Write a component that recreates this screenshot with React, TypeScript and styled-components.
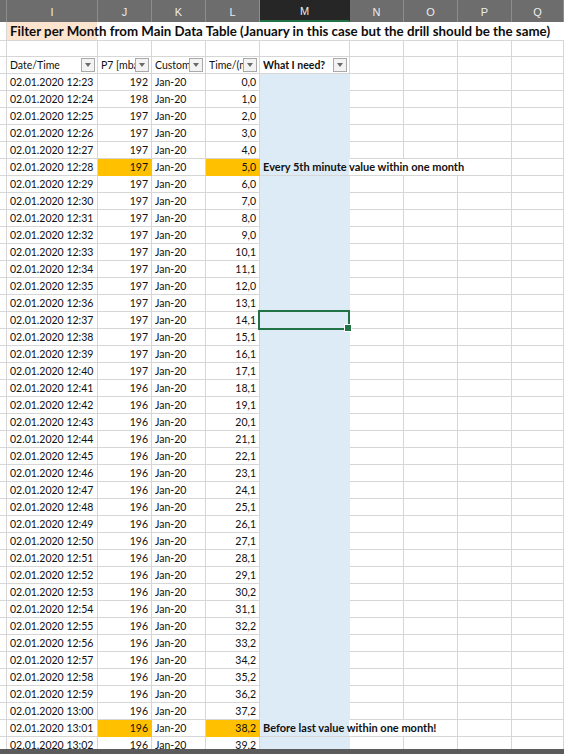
import React from "react";
import styled, { createGlobalStyle } from "styled-components";

const GlobalStyle = createGlobalStyle`
  html, body { margin: 0; padding: 0; background: #ffffff; }
  body { overflow: hidden; font-family: Lato, "Liberation Sans", sans-serif; }
  * { box-sizing: border-box; }
`;

const GRID = "#d6d6d6";
const PEACH = "#fce4cf";
const BLUE = "#ddebf7";
const ORANGE = "#ffc000";

// column widths (each includes its right gridline)
const COLS = [7, 91, 54, 54, 54, 90, 54, 54, 54, 52];
const LETTERS = ["", "I", "J", "K", "L", "M", "N", "O", "P", "Q"];

const Window = styled.div`
  width: 564px;
  height: 754px;
  display: flex;
  flex-direction: column;
  overflow: hidden;
`;

const Sheet = styled.div`
  flex: 1;
  min-height: 0;
  overflow: hidden;
  display: grid;
  grid-template-columns: ${COLS.map((c) => `${c}px`).join(" ")};
  grid-template-rows: 22px 19px 16px 17px;
  grid-auto-rows: 17px;
  align-content: start;
`;

const ColHead = styled.div<{ $active?: boolean }>`
  display: flex;
  align-items: center;
  justify-content: center;
  background: ${(p) => (p.$active ? "#262626" : "#6d6d6d")};
  color: ${(p) => (p.$active ? "#e4efe7" : "#ececec")};
  font-family: "Liberation Sans", Arial, sans-serif;
  font-size: 11px;
  padding-top: 2px;
  border-right: 1px solid ${(p) => (p.$active ? "#262626" : "#8d8d8d")};
  border-bottom: ${(p) => (p.$active ? "2px solid #217346" : "none")};
`;

const Cell = styled.div<{
  $right?: boolean;
  $fill?: string;
  $bold?: boolean;
  $span?: number;
  $bg?: string;
}>`
  position: relative;
  grid-column: ${(p) => (p.$span ? `span ${p.$span}` : "auto")};
  display: flex;
  align-items: flex-end;
  justify-content: ${(p) => (p.$right ? "flex-end" : "flex-start")};
  padding: 0 3px 1px 3px;
  font-size: ${(p) => (p.$bold ? "11px" : "10.5px")};
  line-height: 14px;
  color: #111111;
  font-weight: ${(p) => (p.$bold ? 700 : 400)};
  white-space: nowrap;
  background: ${(p) => p.$bg ?? p.$fill ?? "#ffffff"};
  border-right: 1px solid ${(p) => (p.$fill ? p.$fill : GRID)};
  border-bottom: 1px solid ${(p) => (p.$fill ? p.$fill : GRID)};
`;

const TitleCell = styled(Cell)`
  font-size: 13.3px;
  font-weight: 700;
  align-items: center;
  padding: 0 3px 0 3px;
  color: #0d0d0d;
  border-right: none;
  background: linear-gradient(to right, ${PEACH} 0 90px, #ffffff 90px);
`;

const FilterCell = styled(Cell)`
  align-items: center;
  padding: 0 2px 0 3px;
  font-size: 10.5px;
`;

const FilterLabel = styled.span`
  flex: 1;
  min-width: 0;
  overflow: hidden;
`;

const DropButton = styled.span`
  flex: none;
  width: 14px;
  height: 14px;
  display: flex;
  align-items: center;
  justify-content: center;
  background: #f3f3f3;
  border: 1px solid #a9a9a9;
  &::after {
    content: "";
    width: 0;
    height: 0;
    border-left: 3.5px solid transparent;
    border-right: 3.5px solid transparent;
    border-top: 4px solid #6a6a6a;
  }
`;

const Selection = styled.span`
  position: absolute;
  left: -2px;
  top: -2px;
  right: -1px;
  bottom: -2px;
  border: 2px solid #217346;
  pointer-events: none;
  z-index: 2;
  &::after {
    content: "";
    position: absolute;
    right: -4px;
    bottom: -4px;
    width: 6px;
    height: 6px;
    background: #217346;
    border: 1px solid #ffffff;
  }
`;

const StatusStrip = styled.div`
  flex: none;
  height: 5px;
  background: #5b5b5b;
`;

type Row = { t: string; p: number; v: string; mark?: boolean; note?: string };

const rows: Row[] = [
  { t: "12:23", p: 192, v: "0,0" },
  { t: "12:24", p: 198, v: "1,0" },
  { t: "12:25", p: 197, v: "2,0" },
  { t: "12:26", p: 197, v: "3,0" },
  { t: "12:27", p: 197, v: "4,0" },
  { t: "12:28", p: 197, v: "5,0", mark: true, note: "Every 5th minute value within one month" },
  { t: "12:29", p: 197, v: "6,0" },
  { t: "12:30", p: 197, v: "7,0" },
  { t: "12:31", p: 197, v: "8,0" },
  { t: "12:32", p: 197, v: "9,0" },
  { t: "12:33", p: 197, v: "10,1" },
  { t: "12:34", p: 197, v: "11,1" },
  { t: "12:35", p: 197, v: "12,0" },
  { t: "12:36", p: 197, v: "13,1" },
  { t: "12:37", p: 197, v: "14,1" },
  { t: "12:38", p: 197, v: "15,1" },
  { t: "12:39", p: 197, v: "16,1" },
  { t: "12:40", p: 197, v: "17,1" },
  { t: "12:41", p: 196, v: "18,1" },
  { t: "12:42", p: 196, v: "19,1" },
  { t: "12:43", p: 196, v: "20,1" },
  { t: "12:44", p: 196, v: "21,1" },
  { t: "12:45", p: 196, v: "22,1" },
  { t: "12:46", p: 196, v: "23,1" },
  { t: "12:47", p: 196, v: "24,1" },
  { t: "12:48", p: 196, v: "25,1" },
  { t: "12:49", p: 196, v: "26,1" },
  { t: "12:50", p: 196, v: "27,1" },
  { t: "12:51", p: 196, v: "28,1" },
  { t: "12:52", p: 196, v: "29,1" },
  { t: "12:53", p: 196, v: "30,2" },
  { t: "12:54", p: 196, v: "31,1" },
  { t: "12:55", p: 196, v: "32,2" },
  { t: "12:56", p: 196, v: "33,2" },
  { t: "12:57", p: 196, v: "34,2" },
  { t: "12:58", p: 196, v: "35,2" },
  { t: "12:59", p: 196, v: "36,2" },
  { t: "13:00", p: 196, v: "37,2" },
  { t: "13:01", p: 196, v: "38,2", mark: true, note: "Before last value within one month!" },
  { t: "13:02", p: 196, v: "39,2" },
];

const SELECTED = "12:37";

const blanks = (n: number, key: string) =>
  Array.from({ length: n }, (_, i) => <Cell key={`${key}-${i}`} />);

const noteSpan = (text: string) => (text.length > 36 ? 4 : 3);

export default function App() {
  return (
    <Window>
      <GlobalStyle />
      <Sheet>
        {LETTERS.map((l, i) => (
          <ColHead key={`h${i}`} $active={l === "M"}>
            {l}
          </ColHead>
        ))}

        <Cell />
        <TitleCell $span={9}>
          Filter per Month from Main Data Table (January in this case but the drill should be the same)
        </TitleCell>

        {blanks(10, "blank")}

        <Cell />
        <FilterCell>
          <FilterLabel>Date/Time</FilterLabel>
          <DropButton />
        </FilterCell>
        <FilterCell>
          <FilterLabel>P7 [mbar]</FilterLabel>
          <DropButton />
        </FilterCell>
        <FilterCell>
          <FilterLabel>Customer</FilterLabel>
          <DropButton />
        </FilterCell>
        <FilterCell>
          <FilterLabel>Time/(min)</FilterLabel>
          <DropButton />
        </FilterCell>
        <FilterCell $bold>
          <FilterLabel>What I need?</FilterLabel>
          <DropButton />
        </FilterCell>
        {blanks(4, "fh")}

        {rows.map((r) => {
          const span = r.note ? noteSpan(r.note) : 0;
          return (
            <React.Fragment key={r.t}>
              <Cell />
              <Cell>02.01.2020 {r.t}</Cell>
              <Cell $right $fill={r.mark ? ORANGE : undefined}>
                {r.p}
              </Cell>
              <Cell>Jan-20</Cell>
              <Cell $right $fill={r.mark ? ORANGE : undefined}>
                {r.v}
              </Cell>
              {r.note ? (
                <Cell
                  $span={span}
                  $bold
                  $bg={`linear-gradient(to right, ${BLUE} 0 89px, #ffffff 89px)`}
                >
                  {r.note}
                </Cell>
              ) : (
                <Cell $fill={BLUE}>{r.t === SELECTED && <Selection />}</Cell>
              )}
              {blanks(4 - (span ? span - 1 : 0), r.t)}
            </React.Fragment>
          );
        })}
      </Sheet>
      <StatusStrip />
    </Window>
  );
}
